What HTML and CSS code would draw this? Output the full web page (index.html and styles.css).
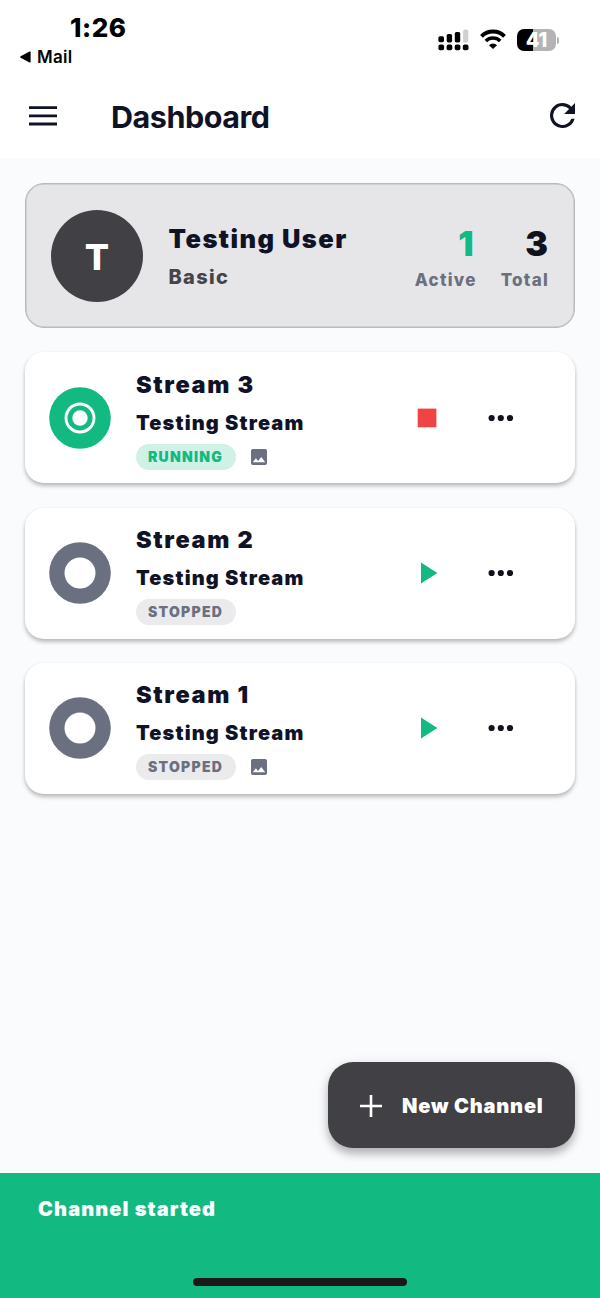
FILE: index.html
```html
<!DOCTYPE html>
<html lang="en">
<head>
<meta charset="utf-8">
<title>Dashboard</title>
<link rel="stylesheet" href="styles.css">
</head>
<body>
<div class="screen">
  <div class="statusbar">
    <div class="status-left">
      <div class="time">1:26</div>
      <div class="back"><svg width="11" height="12" viewBox="0 0 11 12"><path d="M0.6 5.2 9.6 .6Q10.6 .2 10.6 1.2V10.8Q10.6 11.8 9.6 11.4L.6 6.8Q-.4 6 .6 5.2z"/></svg><span>Mail</span></div>
    </div>
    <div class="status-right">
      <svg width="32" height="22" viewBox="0 0 32 22">
        <rect x="0.4" y="7.2" width="5.6" height="6" rx="1.6"/><rect x="8.700" y="5" width="5.4" height="8.4" rx="1.6"/><rect x="16.800" y="3" width="5.4" height="10.4" rx="1.6"/><rect x="25.100" y="0.6" width="5.2" height="12.8" rx="1.6" fill="#d0d0d0"/>
        <rect x="0.4" y="15.600" width="5.700" height="5.700" rx="1.8"/><rect x="8.600" y="15.600" width="5.700" height="5.700" rx="1.8"/><rect x="16.700" y="15.600" width="5.700" height="5.700" rx="1.8"/><rect x="24.800" y="15.600" width="5.700" height="5.700" rx="1.8"/>
      </svg>
      <svg class="wifi" width="26" height="20" viewBox="0 0 26 20">
        <path d="M1.5 7.3a16.300 16.300 0 0 1 23 0" fill="none" stroke="#000" stroke-width="4"/><path d="M5.800 12.100a10.200 10.200 0 0 1 14.400 0" fill="none" stroke="#000" stroke-width="3.500"/><path d="M9 16.200a5.800 5.800 0 0 1 8 0L13 20z"/>
      </svg>
      <div class="battery"><span class="battery-body">41</span><span class="battery-tip"></span></div>
    </div>
  </div>

  <header class="appbar">
    <svg class="menu" width="28" height="20" viewBox="0 0 28 20"><path d="M0 1.600H28M0 9.800H28M0 18H28" stroke="#101226" stroke-width="2.800"/></svg>
    <h1>Dashboard</h1>
    <svg class="refresh" width="25" height="25" viewBox="4 4 16 16"><path fill="#101226" d="M17.65 6.35A7.96 7.96 0 0 0 12 4a8 8 0 1 0 7.73 10h-2.08A6 6 0 1 1 12 6c1.66 0 3.14.69 4.22 1.78L13 11h7V4l-2.35 2.35z"/></svg>
  </header>

  <main>
    <section class="profile">
      <div class="avatar">T</div>
      <div class="who"><div class="name">Testing User</div><div class="plan">Basic</div></div>
      <div class="stat active"><div class="num green">1</div><div class="label">Active</div></div>
      <div class="stat total"><div class="num">3</div><div class="label">Total</div></div>
    </section>

    <section class="card">
      <svg class="state" width="62" height="62" viewBox="0 0 62 62"><circle cx="31" cy="31" r="30.8" fill="#12b981"/><circle cx="31" cy="31" r="14" fill="none" stroke="#fff" stroke-width="2.9"/><circle cx="31" cy="31" r="7.7" fill="#fff"/></svg>
      <div class="info">
        <div class="title">Stream 3</div><div class="desc">Testing Stream</div>
        <div class="tags"><span class="pill running">RUNNING</span><svg class="pic" width="16" height="16" viewBox="3 3 18 18"><path fill="#6b7080" d="M21 19V5a2 2 0 0 0-2-2H5a2 2 0 0 0-2 2v14a2 2 0 0 0 2 2h14a2 2 0 0 0 2-2zM8.500 13.500l2.500 3.010L14.500 12l4.500 6H5z"/></svg></div>
      </div>
      <svg class="action" width="20" height="22" viewBox="0 0 20 22"><path fill="#ef4444" d="M.7 1.600h18.700v18.700H.7z"/></svg>
      <svg class="more" width="26" height="8" viewBox="0 0 26 8"><g fill="#10121c"><circle cx="3.600" cy="4" r="3.100"/><circle cx="12.800" cy="4" r="3.100"/><circle cx="22" cy="4" r="3.100"/></g></svg>
    </section>

    <section class="card">
      <svg class="state" width="62" height="62" viewBox="0 0 62 62"><circle cx="31" cy="31" r="30.8" fill="#6b7080"/><circle cx="31" cy="31" r="15.500" fill="#fff"/></svg>
      <div class="info">
        <div class="title">Stream 2</div><div class="desc">Testing Stream</div>
        <div class="tags"><span class="pill stopped">STOPPED</span></div>
      </div>
      <svg class="action" width="20" height="22" viewBox="0 0 20 22"><path fill="#12b981" d="M4 .5 20.500 11 4 21.500z"/></svg>
      <svg class="more" width="26" height="8" viewBox="0 0 26 8"><g fill="#10121c"><circle cx="3.600" cy="4" r="3.100"/><circle cx="12.800" cy="4" r="3.100"/><circle cx="22" cy="4" r="3.100"/></g></svg>
    </section>

    <section class="card">
      <svg class="state" width="62" height="62" viewBox="0 0 62 62"><circle cx="31" cy="31" r="30.8" fill="#6b7080"/><circle cx="31" cy="31" r="15.500" fill="#fff"/></svg>
      <div class="info">
        <div class="title">Stream 1</div><div class="desc">Testing Stream</div>
        <div class="tags"><span class="pill stopped">STOPPED</span><svg class="pic" width="16" height="16" viewBox="3 3 18 18"><path fill="#6b7080" d="M21 19V5a2 2 0 0 0-2-2H5a2 2 0 0 0-2 2v14a2 2 0 0 0 2 2h14a2 2 0 0 0 2-2zM8.500 13.500l2.500 3.010L14.500 12l4.500 6H5z"/></svg></div>
      </div>
      <svg class="action" width="20" height="22" viewBox="0 0 20 22"><path fill="#12b981" d="M4 .5 20.500 11 4 21.500z"/></svg>
      <svg class="more" width="26" height="8" viewBox="0 0 26 8"><g fill="#10121c"><circle cx="3.600" cy="4" r="3.100"/><circle cx="12.800" cy="4" r="3.100"/><circle cx="22" cy="4" r="3.100"/></g></svg>
    </section>

    <div class="fab">
      <svg width="22" height="22" viewBox="0 0 22 22"><path d="M0 11H22M11 0V22" stroke="#fff" stroke-width="2.600"/></svg>
      <span>New Channel</span>
    </div>
  </main>

  <footer class="snackbar"><div class="message">Channel started</div><div class="home"></div></footer>
</div>
</body>
</html>
```
FILE: styles.css
```css
* { box-sizing: border-box; }
body { margin: 0; font-family: Inter, "Liberation Sans", sans-serif; color: #101226; }
svg { display: block; flex: none; }
.screen { width: 600px; height: 1298px; display: flex; flex-direction: column; background: #fafbfd; overflow: hidden; }

.statusbar { height: 75px; background: #fff; display: flex; justify-content: space-between; color: #000; }
.status-left { padding: 12px 0 0 20px; }
.time { font-size: 26px; line-height: 32px; font-weight: 800; padding-left: 50px; letter-spacing: .5px; }
.back { display: flex; align-items: center; gap: 6px; font-size: 17px; line-height: 26px; font-weight: 600; letter-spacing: .3px; }
.status-right { display: flex; align-items: flex-start; padding: 29px 41px 0 0; }
.wifi { margin: 0 0 0 10px; }
.battery { display: flex; align-items: center; margin-left: 11px; }
.battery-body { width: 39px; height: 22px; border-radius: 7px; background: linear-gradient(90deg, #000 16px, #b4b4b4 16px); color: #fff; font-size: 20px; line-height: 22px; font-weight: 800; text-align: center; }
.battery-tip { width: 2px; height: 7px; margin-left: 1px; border-radius: 0 3px 3px 0; background: #b4b4b4; }

.appbar { height: 83px; background: #fff; display: flex; align-items: center; padding: 0 25px 2px 29px; }
h1 { margin: 3px auto 0 54px; font-size: 30.500px; line-height: 38px; font-weight: 700; letter-spacing: -.45px; }

main { flex: 1; display: flex; flex-direction: column; gap: 24.300px; padding: 25px 25px; }
.profile { height: 145px; flex: none; display: flex; align-items: center; padding: 0 25px 0 24.500px; border: 1.500px solid #b9babd; border-radius: 19px; background: #e6e6e9; box-shadow: inset 0 0 0 .5px #b9babd; }
.avatar { width: 92px; height: 92px; border-radius: 50%; background: #414045; color: #fff; font-size: 36px; font-weight: 800; line-height: 94px; padding-left: 1px; text-align: center; }
.who { flex: 1; margin-left: 26px; padding-top: 1px; }
.name { font-size: 25.500px; line-height: 42px; font-weight: 900; letter-spacing: 1.450px; }
.plan { font-size: 20px; line-height: 35px; font-weight: 800; letter-spacing: 1.300px; color: #444449; }
.stat { text-align: right; padding-top: 6px; }
.total { margin-left: 24px; }
.num { font-size: 34px; line-height: 43px; font-weight: 900; color: #10121c; padding-right: 1px; }
.num.green { color: #12b981; padding-right: 3px; }
.label { font-size: 17px; line-height: 30px; font-weight: 800; letter-spacing: 1.250px; color: #6b7080; }

.card { height: 131px; flex: none; display: flex; align-items: center; padding: 0 61px 0 24px; background: #fff; border-radius: 19px; box-shadow: 0 3px 4px rgba(0,0,0,.24), 0 1px 4px rgba(0,0,0,.05); }
.info { flex: 1; margin-left: 25px; }
.title { font-size: 23.500px; line-height: 38px; font-weight: 900; letter-spacing: 1.650px; }
.desc { font-size: 20px; line-height: 38px; font-weight: 900; letter-spacing: 1.150px; }
.tags { display: flex; align-items: center; margin-top: 2px; }
.pill { width: 99.500px; height: 26px; line-height: 26px; border-radius: 13px; font-size: 14px; font-weight: 900; letter-spacing: 1.250px; padding-left: 12px; }
.running { background: #d0f1e6; color: #12b981; }
.stopped { background: #ebebed; color: #6b7080; }
.pic { margin-left: 15px; }
.action { margin-right: 51px; }

.fab { margin: auto 0 0 auto; width: 247px; height: 86px; flex: none; display: flex; align-items: center; gap: 20px; padding: 1px 0 0 32px; border-radius: 25px; background: #414045; color: #fff; font-size: 20px; font-weight: 900; letter-spacing: .8px; box-shadow: 0 6px 9px rgba(0,0,0,.25), 0 2px 14px rgba(0,0,0,.08); }

.snackbar { height: 125px; background: #12b981; color: #fff; display: flex; flex-direction: column; align-items: center; justify-content: space-between; padding: 20px 0 12px; }
.message { width: 100%; padding-left: 38px; font-size: 20px; line-height: 32px; font-weight: 900; letter-spacing: 1.100px; }
.home { width: 214px; height: 8px; border-radius: 4px; background: #191919; }
```
